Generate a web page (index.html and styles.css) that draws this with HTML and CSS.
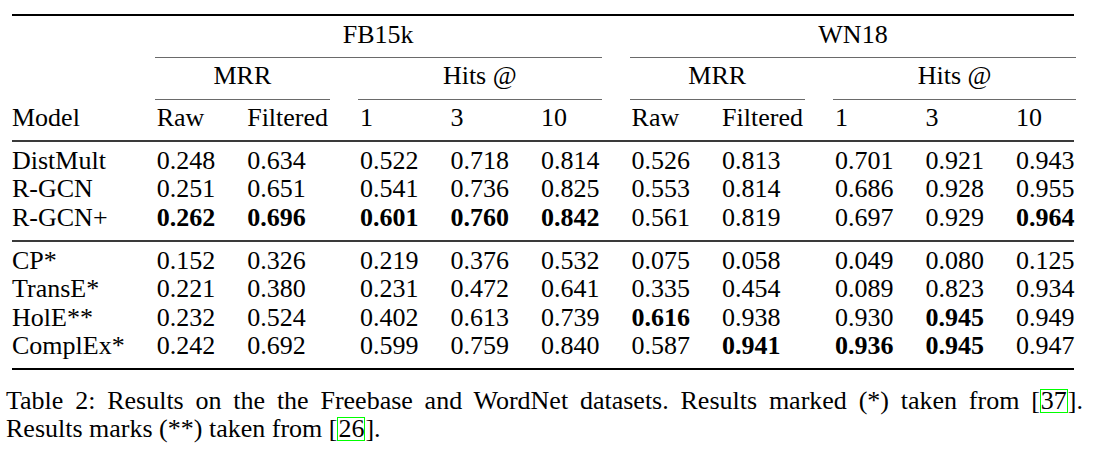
FILE: index.html
```html
<!DOCTYPE html>
<html lang="en">
<head>
<meta charset="utf-8">
<title>Table 2: Results on Freebase and WordNet</title>
<link rel="stylesheet" href="styles.css">
</head>
<body>
<table class="results">
  <thead>
    <tr class="row-datasets">
      <th class="blank"></th>
      <th colspan="5" class="grp"><div class="cmid">FB15k</div></th>
      <th colspan="5" class="grp"><div class="cmid">WN18</div></th>
    </tr>
    <tr class="row-metrics">
      <th class="blank"></th>
      <th colspan="2" class="grp"><div class="cmid">MRR</div></th>
      <th colspan="3" class="grp"><div class="cmid">Hits @</div></th>
      <th colspan="2" class="grp"><div class="cmid">MRR</div></th>
      <th colspan="3" class="grp"><div class="cmid">Hits @</div></th>
    </tr>
    <tr class="row-cols">
      <th>Model</th>
      <th>Raw</th><th>Filtered</th><th>1</th><th>3</th><th>10</th>
      <th>Raw</th><th>Filtered</th><th>1</th><th>3</th><th>10</th>
    </tr>
  </thead>
  <tbody class="block">
    <tr><td>DistMult</td><td>0.248</td><td>0.634</td><td>0.522</td><td>0.718</td><td>0.814</td><td>0.526</td><td>0.813</td><td>0.701</td><td>0.921</td><td>0.943</td></tr>
    <tr><td>R-GCN</td><td>0.251</td><td>0.651</td><td>0.541</td><td>0.736</td><td>0.825</td><td>0.553</td><td>0.814</td><td>0.686</td><td>0.928</td><td>0.955</td></tr>
    <tr><td>R-GCN+</td><td class="best">0.262</td><td class="best">0.696</td><td class="best">0.601</td><td class="best">0.760</td><td class="best">0.842</td><td>0.561</td><td>0.819</td><td>0.697</td><td>0.929</td><td class="best">0.964</td></tr>
  </tbody>
  <tbody class="block block-last">
    <tr><td>CP*</td><td>0.152</td><td>0.326</td><td>0.219</td><td>0.376</td><td>0.532</td><td>0.075</td><td>0.058</td><td>0.049</td><td>0.080</td><td>0.125</td></tr>
    <tr><td>TransE*</td><td>0.221</td><td>0.380</td><td>0.231</td><td>0.472</td><td>0.641</td><td>0.335</td><td>0.454</td><td>0.089</td><td>0.823</td><td>0.934</td></tr>
    <tr><td>HolE**</td><td>0.232</td><td>0.524</td><td>0.402</td><td>0.613</td><td>0.739</td><td class="best">0.616</td><td>0.938</td><td>0.930</td><td class="best">0.945</td><td>0.949</td></tr>
    <tr><td>ComplEx*</td><td>0.242</td><td>0.692</td><td>0.599</td><td>0.759</td><td>0.840</td><td>0.587</td><td class="best">0.941</td><td class="best">0.936</td><td class="best">0.945</td><td>0.947</td></tr>
  </tbody>
</table>
<p class="caption">Table 2: Results on the the Freebase and WordNet datasets. Results marked (*) taken from [<span class="cite">37</span>]. Results marks (**) taken from [<span class="cite">26</span>].</p>
</body>
</html>
```

FILE: styles.css
```css
html, body {
  margin: 0;
  padding: 0;
  background: #ffffff;
}

body {
  color: #000000;
  font-family: "Liberation Serif", "Times New Roman", serif;
  font-size: 26px;
}

.results {
  border-collapse: separate;
  border-spacing: 0;
  margin: 14px 0 0 12px;
}

.results th,
.results td {
  padding: 0 16px;
  line-height: 28.5px;
  font-weight: normal;
  text-align: left;
  white-space: nowrap;
  vertical-align: baseline;
}

.results th:first-child,
.results td:first-child {
  padding-left: 0;
}

.results th:last-child,
.results td:last-child {
  padding-right: 0;
}

/* header rows */
.row-datasets th {
  border-top: 2px solid #000;
  padding-top: 4.6px;
}

.row-metrics th {
  padding-top: 4.6px;
}

.results .grp {
  text-align: center;
}

.cmid {
  margin: 0 -2px;
  padding-bottom: 7.7px;
  border-bottom: 1px solid #6a6a6a;
  text-align: center;
}

.row-cols th {
  padding-top: 4.6px;
  padding-bottom: 7.7px;
  border-bottom: 2px solid #3a3a3a;
}

/* body blocks */
.block tr:first-child td {
  padding-top: 4.6px;
}

.block tr:last-child td {
  padding-bottom: 7.7px;
}

.block + .block tr:first-child td {
  border-top: 2px solid #3a3a3a;
}

.block-last tr:last-child td {
  border-bottom: 2px solid #000;
}

.results td.best {
  font-weight: bold;
}

/* caption */
.caption {
  width: 1077px;
  margin: 17px 0 0 6px;
  line-height: 28px;
  text-align: justify;
}

.cite {
  display: inline-block;
  line-height: 22px;
  margin: 0 1px;
  outline: 1px solid #00ff00;
}
```
